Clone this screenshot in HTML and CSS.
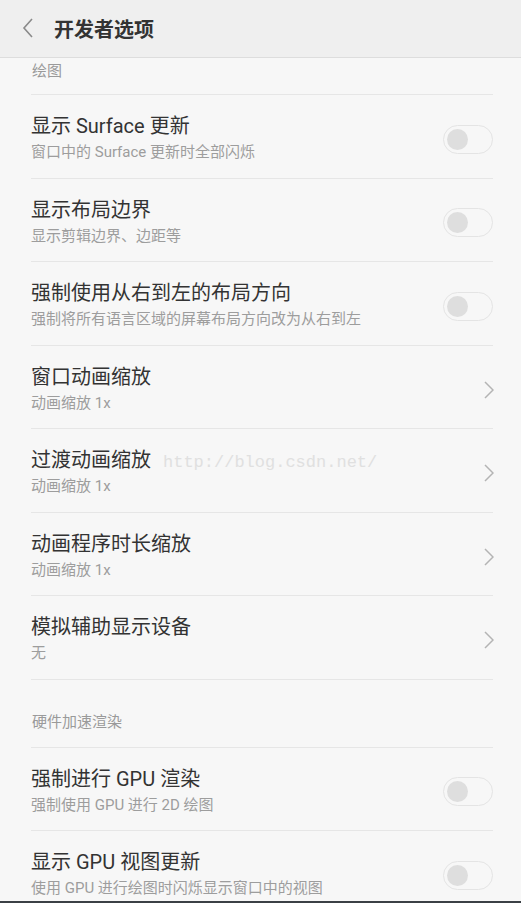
FILE: index.html
```html
<!DOCTYPE html>
<html lang="zh-CN">

<head>
    <meta charset="UTF-8">
    <meta name="viewport" content="width=device-width, initial-scale=1.0">
    <title>开发者选项</title>
    <link rel="stylesheet" href="styles.css">
</head>

<body>
    <div id="screen">
        <div class="top-bar">
            <svg class="back" width="12" height="20" viewBox="0 0 12 20">
                <path d="M10 1 L2 10 L10 19" fill="none" stroke="#8a8a8a" stroke-width="1.6" />
            </svg>
            <span class="top-title">开发者选项</span>
        </div>
        <div class="content">
            <div class="section first">绘图</div>
            <div class="row">
                <div class="text">
                    <div class="title">显示 Surface 更新</div>
                    <div class="sub">窗口中的 Surface 更新时全部闪烁</div>
                </div>
                <div class="switch"><div class="knob"></div></div>
            </div>
            <div class="row">
                <div class="text">
                    <div class="title">显示布局边界</div>
                    <div class="sub">显示剪辑边界、边距等</div>
                </div>
                <div class="switch"><div class="knob"></div></div>
            </div>
            <div class="row">
                <div class="text">
                    <div class="title">强制使用从右到左的布局方向</div>
                    <div class="sub">强制将所有语言区域的屏幕布局方向改为从右到左</div>
                </div>
                <div class="switch"><div class="knob"></div></div>
            </div>
            <div class="row">
                <div class="text">
                    <div class="title">窗口动画缩放</div>
                    <div class="sub">动画缩放 1x</div>
                </div>
                <svg class="arrow" width="10" height="18" viewBox="0 0 10 18">
                    <path d="M1 1 L9 9 L1 17" fill="none" stroke="#b4b4b4" stroke-width="1.5" />
                </svg>
            </div>
            <div class="row">
                <div class="text">
                    <div class="title">过渡动画缩放<span class="mark">http://blog.csdn.net/</span></div>
                    <div class="sub">动画缩放 1x</div>
                </div>
                <svg class="arrow" width="10" height="18" viewBox="0 0 10 18">
                    <path d="M1 1 L9 9 L1 17" fill="none" stroke="#b4b4b4" stroke-width="1.5" />
                </svg>
            </div>
            <div class="row">
                <div class="text">
                    <div class="title">动画程序时长缩放</div>
                    <div class="sub">动画缩放 1x</div>
                </div>
                <svg class="arrow" width="10" height="18" viewBox="0 0 10 18">
                    <path d="M1 1 L9 9 L1 17" fill="none" stroke="#b4b4b4" stroke-width="1.5" />
                </svg>
            </div>
            <div class="row">
                <div class="text">
                    <div class="title">模拟辅助显示设备</div>
                    <div class="sub">无</div>
                </div>
                <svg class="arrow" width="10" height="18" viewBox="0 0 10 18">
                    <path d="M1 1 L9 9 L1 17" fill="none" stroke="#b4b4b4" stroke-width="1.5" />
                </svg>
            </div>
            <div class="section">硬件加速渲染</div>
            <div class="row">
                <div class="text">
                    <div class="title">强制进行 GPU 渲染</div>
                    <div class="sub">强制使用 GPU 进行 2D 绘图</div>
                </div>
                <div class="switch"><div class="knob"></div></div>
            </div>
            <div class="row">
                <div class="text">
                    <div class="title">显示 GPU 视图更新</div>
                    <div class="sub">使用 GPU 进行绘图时闪烁显示窗口中的视图</div>
                </div>
                <div class="switch"><div class="knob"></div></div>
            </div>
        </div>
        <div class="nav-edge"></div>
    </div>
</body>

</html>
```

FILE: styles.css
```css
html,
body {
    margin: 0;
    height: 100%;
}

body {
    background: #f7f7f7;
    font-family: "Roboto", "Noto Sans CJK SC", sans-serif;
    overflow: hidden;
}

#screen {
    display: flex;
    flex-direction: column;
    height: 903px;
}

.top-bar {
    display: flex;
    align-items: center;
    height: 58px;
    flex-shrink: 0;
    background: #efefef;
    border-bottom: 1px solid #dddddd;
    box-sizing: border-box;
    padding-left: 22px;
}

.back {
    margin-top: -1px;
}

.top-title {
    margin-left: 20px;
    font-size: 20px;
    font-weight: 700;
    color: #333333;
    font-family: "Noto Sans CJK SC", sans-serif;
}

.content {
    flex: 1;
    overflow: hidden;
    padding: 0 28px 0 31px;
}

.section {
    font-size: 15px;
    line-height: 20px;
    color: #9a9a9a;
    padding: 32px 0 15px 1px;
    border-top: 1px solid #e6e6e6;
}

.section.first {
    padding-top: 3px;
    padding-bottom: 13px;
    border-top: none;
}

.row {
    display: flex;
    align-items: center;
    border-top: 1px solid #e6e6e6;
    padding: 18px 0 12.5px 0;
}

.text {
    flex: 1;
}

.title {
    font-size: 20px;
    line-height: 26px;
    height: 26px;
    color: #333333;
}

.sub {
    font-size: 15px;
    line-height: 26px;
    color: #9d9d9d;
}

.mark {
    margin-left: 12px;
    font-family: "Liberation Mono", monospace;
    font-size: 17px;
    line-height: 1;
    color: #e0e0e0;
}

.switch {
    width: 50px;
    height: 29px;
    box-sizing: border-box;
    border: 1px solid #e4e4e4;
    border-radius: 15px;
    background: #f7f7f7;
    display: flex;
    align-items: center;
    padding-left: 3px;
}

.knob {
    width: 21px;
    height: 21px;
    border-radius: 50%;
    background: #dedede;
}

.arrow {
    margin-right: -1px;
}

.nav-edge {
    height: 2px;
    flex-shrink: 0;
    background: #3b4045;
}
```
